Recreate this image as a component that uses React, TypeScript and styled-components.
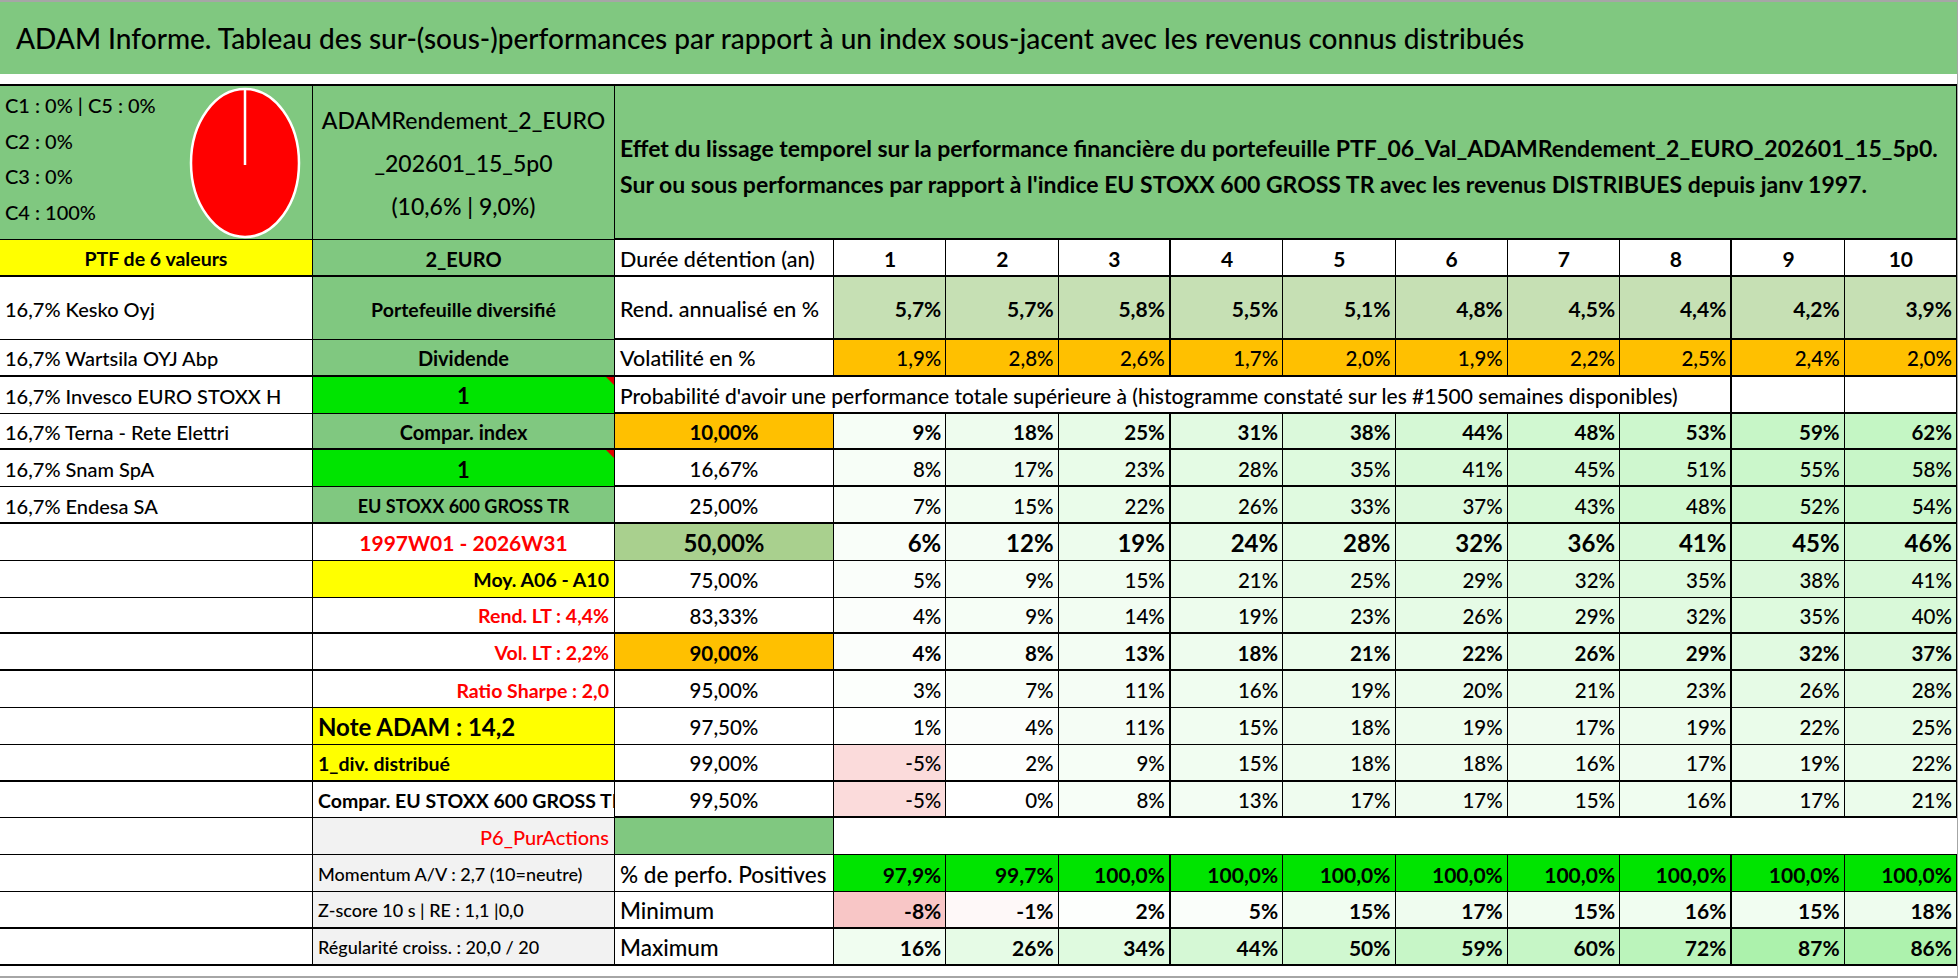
import React from 'react';
import styled, { createGlobalStyle, css } from 'styled-components';

const GREEN = '#80c880';
const LIGHT_GREEN = '#c6e0b4';
const MID_GREEN = '#a9d08e';
const BRIGHT = '#00e400';
const YELLOW = '#ffff00';
const ORANGE = '#ffc000';
const GRAY = '#f2f2f2';
const RED = '#ff0000';

const GlobalStyle = createGlobalStyle`
  html, body { margin: 0; padding: 0; background: #fff; }
  body { font-family: Lato, "Open Sans", "Liberation Sans", sans-serif; color: #000; }
`;

const Frame = styled.div`
  width: 1958px;
  box-sizing: border-box;
  border-top: 2px solid #a6a6a6;
  border-bottom: 2px solid #a6a6a6;
  border-right: 1px solid #a6a6a6;
  display: flex;
  flex-direction: column;
`;

const TitleBar = styled.div`
  height: 72px;
  background: ${GREEN};
  display: flex;
  align-items: center;
  padding-left: 16px;
  font-size: 28px;
  font-weight: 500;
  white-space: nowrap;
`;

const Strip = styled.div`
  height: 10px;
  background: #fff;
`;

const Footer = styled.div`
  height: 10px;
  background: #fff;
`;

const Sheet = styled.div`
  display: grid;
  grid-template-columns: 313px 302px 219px repeat(10, 1fr);
  grid-template-rows: 154px 37px 63px repeat(17, 36.8px);
  border-top: 2px solid #000;
`;

type CellProps = {
  $bg?: string;
  $bb?: number;
  $br?: number;
  $span?: number;
  $align?: 'left' | 'center' | 'right';
  $bold?: boolean;
  $size?: number;
  $color?: string;
  $flag?: boolean;
};

const cellBase = css<CellProps>`
  box-sizing: border-box;
  position: relative;
  display: flex;
  align-items: center;
  justify-content: ${(p) =>
    p.$align === 'center' ? 'center' : p.$align === 'right' ? 'flex-end' : 'flex-start'};
  min-width: 0;
  overflow: hidden;
  white-space: nowrap;
  padding: 2px 5px 0 5px;
  background: ${(p) => p.$bg ?? '#fff'};
  border-right: ${(p) => p.$br ?? 1}px solid #000;
  border-bottom: ${(p) => p.$bb ?? 1}px solid #000;
  color: ${(p) => p.$color ?? '#000'};
  font-weight: ${(p) => (p.$bold ? 700 : 500)};
  font-size: ${(p) => p.$size ?? 20}px;
  grid-column: ${(p) => (p.$span ? `span ${p.$span}` : 'auto')};
  ${(p) =>
    p.$flag &&
    css`
      &::after {
        content: '';
        position: absolute;
        top: 0;
        right: 0;
        border-top: 8px solid #e00000;
        border-left: 8px solid transparent;
      }
    `}
`;

const NameCell = styled.div<CellProps>`
  ${cellBase}
`;
const TagCell = styled.div<CellProps>`
  ${cellBase}
`;
const LabelCell = styled.div<CellProps>`
  ${cellBase}
`;
const ValueCell = styled.div<CellProps>`
  ${cellBase}
  padding-right: 4px;
`;

const CompoCell = styled.div`
  box-sizing: border-box;
  background: ${GREEN};
  border-right: 1px solid #000;
  border-bottom: 1px solid #000;
  display: flex;
  justify-content: space-between;
  align-items: stretch;
  padding: 0 11px 0 5px;
`;

const CompoList = styled.div`
  display: flex;
  flex-direction: column;
  padding-top: 2px;
  font-size: 20px;
  font-weight: 500;
  line-height: 35.5px;
  white-space: nowrap;
`;

const PieBox = styled.div`
  display: flex;
  align-items: center;
`;

const FundCell = styled.div`
  box-sizing: border-box;
  background: ${GREEN};
  border-right: 1px solid #000;
  border-bottom: 1px solid #000;
  display: flex;
  flex-direction: column;
  align-items: center;
  justify-content: center;
  font-size: 23px;
  font-weight: 500;
  line-height: 43px;
  padding-top: 2px;
`;

const EffectCell = styled.div`
  box-sizing: border-box;
  grid-column: span 11;
  background: ${GREEN};
  border-right: 1px solid #000;
  border-bottom: 2px solid #000;
  display: flex;
  flex-direction: column;
  justify-content: center;
  padding: 8px 0 0 5px;
  font-size: 23px;
  font-weight: 700;
  line-height: 36px;
  white-space: nowrap;
  overflow: hidden;
`;

const Pie = () => (
  <svg width="112" height="152" viewBox="0 0 112 152">
    <ellipse cx="56" cy="76" rx="54" ry="74" fill={RED} stroke="#fff" strokeWidth="2.5" />
    <line x1="56" y1="2" x2="56" y2="78" stroke="#fff" strokeWidth="2.5" />
  </svg>
);

type Left = {
  a?: string;
  aBg?: string;
  aBold?: boolean;
  aAlign?: 'left' | 'center' | 'right';
  b?: string;
  bBg?: string;
  bBold?: boolean;
  bAlign?: 'left' | 'center' | 'right';
  bColor?: string;
  bSize?: number;
  flag?: boolean;
};

const leftRows: Left[] = [
  {},
  { a: 'PTF de 6 valeurs', aBg: YELLOW, aBold: true, aAlign: 'center', b: '2_EURO', bBg: GREEN, bBold: true, bAlign: 'center', bSize: 20 },
  { a: '16,7% Kesko Oyj', b: 'Portefeuille diversifié', bBg: GREEN, bBold: true, bAlign: 'center', bSize: 19.5 },
  { a: '16,7% Wartsila OYJ Abp', b: 'Dividende', bBg: GREEN, bBold: true, bAlign: 'center' },
  { a: '16,7% Invesco EURO STOXX H', b: '1', bBg: BRIGHT, bBold: true, bAlign: 'center', flag: true, bSize: 22 },
  { a: '16,7% Terna - Rete Elettri', b: 'Compar. index', bBg: GREEN, bBold: true, bAlign: 'center' },
  { a: '16,7% Snam SpA', b: '1', bBg: BRIGHT, bBold: true, bAlign: 'center', flag: true, bSize: 22 },
  { a: '16,7% Endesa SA', b: 'EU STOXX 600 GROSS TR', bBg: GREEN, bBold: true, bAlign: 'center', bSize: 18 },
  { b: '1997W01 - 2026W31', bColor: RED, bBold: true, bAlign: 'center', bSize: 21 },
  { b: 'Moy. A06 - A10', bBg: YELLOW, bBold: true, bAlign: 'right', bSize: 19.5 },
  { b: 'Rend. LT : 4,4%', bColor: RED, bBold: true, bAlign: 'right', bSize: 19.5 },
  { b: 'Vol. LT : 2,2%', bColor: RED, bBold: true, bAlign: 'right', bSize: 19.5 },
  { b: 'Ratio Sharpe : 2,0', bColor: RED, bBold: true, bAlign: 'right', bSize: 19.5 },
  { b: 'Note ADAM : 14,2', bBg: YELLOW, bBold: true, bAlign: 'left', bSize: 24 },
  { b: '1_div. distribué', bBg: YELLOW, bBold: true, bAlign: 'left', bSize: 19.5 },
  { b: 'Compar. EU STOXX 600 GROSS TR', bBold: true, bAlign: 'left', bSize: 19.5 },
  { b: 'P6_PurActions', bBg: GRAY, bColor: RED, bAlign: 'right', bSize: 20 },
  { b: 'Momentum A/V : 2,7 (10=neutre)', bBg: GRAY, bAlign: 'left', bSize: 18 },
  { b: 'Z-score 10 s | RE : 1,1 |0,0', bBg: GRAY, bAlign: 'left', bSize: 18 },
  { b: 'Régularité croiss. : 20,0 / 20', bBg: GRAY, bAlign: 'left', bSize: 18 },
];

const leftBottom = [1, 2, 1, 2, 1, 2, 1, 2, 1, 1, 2, 2, 1, 1, 2, 1, 1, 1, 2, 2];
const rightBottom = [2, 2, 2, 2, 2, 2, 2, 2, 1, 1, 2, 2, 1, 1, 2, 2, 1, 1, 2, 2];
const colRight = (i: number) => (i === 2 || i === 7 ? 2 : 1);

const mix = (a: number[], b: number[], t: number) =>
  `rgb(${a.map((x, i) => Math.round(x + (b[i] - x) * t)).join(',')})`;
const scaleBg = (v: number) =>
  v < 0
    ? mix([255, 255, 255], [248, 198, 198], Math.min(1, -v / 8))
    : mix([255, 255, 255], [160, 240, 160], Math.min(1, v / 100));

const rend = ['5,7%', '5,7%', '5,8%', '5,5%', '5,1%', '4,8%', '4,5%', '4,4%', '4,2%', '3,9%'];
const vol = ['1,9%', '2,8%', '2,6%', '1,7%', '2,0%', '1,9%', '2,2%', '2,5%', '2,4%', '2,0%'];

type PctRow = { label: string; bg?: string; bold?: boolean; big?: boolean; vals: number[] };
const pctRows: PctRow[] = [
  { label: '10,00%', bg: ORANGE, bold: true, vals: [9, 18, 25, 31, 38, 44, 48, 53, 59, 62] },
  { label: '16,67%', vals: [8, 17, 23, 28, 35, 41, 45, 51, 55, 58] },
  { label: '25,00%', vals: [7, 15, 22, 26, 33, 37, 43, 48, 52, 54] },
  { label: '50,00%', bg: MID_GREEN, bold: true, big: true, vals: [6, 12, 19, 24, 28, 32, 36, 41, 45, 46] },
  { label: '75,00%', vals: [5, 9, 15, 21, 25, 29, 32, 35, 38, 41] },
  { label: '83,33%', vals: [4, 9, 14, 19, 23, 26, 29, 32, 35, 40] },
  { label: '90,00%', bg: ORANGE, bold: true, vals: [4, 8, 13, 18, 21, 22, 26, 29, 32, 37] },
  { label: '95,00%', vals: [3, 7, 11, 16, 19, 20, 21, 23, 26, 28] },
  { label: '97,50%', vals: [1, 4, 11, 15, 18, 19, 17, 19, 22, 25] },
  { label: '99,00%', vals: [-5, 2, 9, 15, 18, 18, 16, 17, 19, 22] },
  { label: '99,50%', vals: [-5, 0, 8, 13, 17, 17, 15, 16, 17, 21] },
];

const positives = ['97,9%', '99,7%', '100,0%', '100,0%', '100,0%', '100,0%', '100,0%', '100,0%', '100,0%', '100,0%'];
const minimum = [-8, -1, 2, 5, 15, 17, 15, 16, 15, 18];
const maximum = [16, 26, 34, 44, 50, 59, 60, 72, 87, 86];

const cols = Array.from({ length: 10 }, (_, i) => i);

function rightSide(r: number): React.ReactNode {
  const bb = rightBottom[r];
  if (r === 1) {
    return (
      <>
        <LabelCell $bb={bb} $size={21.5}>Durée détention (an)</LabelCell>
        {cols.map((i) => (
          <ValueCell key={i} $bb={bb} $br={colRight(i)} $align="center" $bold $size={21}>
            {i + 1}
          </ValueCell>
        ))}
      </>
    );
  }
  if (r === 2) {
    return (
      <>
        <LabelCell $bb={bb} $size={21.5}>Rend. annualisé en %</LabelCell>
        {rend.map((v, i) => (
          <ValueCell key={i} $bb={bb} $br={colRight(i)} $align="right" $bold $size={21} $bg={LIGHT_GREEN}>
            {v}
          </ValueCell>
        ))}
      </>
    );
  }
  if (r === 3) {
    return (
      <>
        <LabelCell $bb={bb} $size={21.5}>Volatilité en %</LabelCell>
        {vol.map((v, i) => (
          <ValueCell key={i} $bb={bb} $br={colRight(i)} $align="right" $size={20.5} $bg={ORANGE}>
            {v}
          </ValueCell>
        ))}
      </>
    );
  }
  if (r === 4) {
    return (
      <>
        <LabelCell $bb={bb} $br={2} $span={9} $size={21}>
          Probabilité d'avoir une performance totale supérieure à (histogramme constaté sur les #1500 semaines disponibles)
        </LabelCell>
        <ValueCell $bb={bb} />
        <ValueCell $bb={bb} />
      </>
    );
  }
  if (r >= 5 && r <= 15) {
    const row = pctRows[r - 5];
    const size = row.big ? 24 : 20.5;
    return (
      <>
        <LabelCell $bb={bb} $align="center" $bold={row.bold} $size={size} $bg={row.bg}>
          {row.label}
        </LabelCell>
        {row.vals.map((v, i) => (
          <ValueCell key={i} $bb={bb} $br={colRight(i)} $align="right" $bold={row.bold} $size={size} $bg={scaleBg(v)}>
            {`${v}%`}
          </ValueCell>
        ))}
      </>
    );
  }
  if (r === 16) {
    return (
      <>
        <LabelCell $bb={bb} $bg={GREEN} />
        <ValueCell $bb={bb} $br={0} $span={10} />
      </>
    );
  }
  if (r === 17) {
    return (
      <>
        <LabelCell $bb={bb} $size={22.5}>% de perfo. Positives</LabelCell>
        {positives.map((v, i) => (
          <ValueCell key={i} $bb={bb} $br={colRight(i)} $align="right" $bold $size={21} $bg={BRIGHT}>
            {v}
          </ValueCell>
        ))}
      </>
    );
  }
  const data = r === 18 ? minimum : maximum;
  return (
    <>
      <LabelCell $bb={bb} $size={22.5}>{r === 18 ? 'Minimum' : 'Maximum'}</LabelCell>
      {data.map((v, i) => (
        <ValueCell key={i} $bb={bb} $br={colRight(i)} $align="right" $bold $size={21} $bg={scaleBg(v)}>
          {`${v}%`}
        </ValueCell>
      ))}
    </>
  );
}

export default function App() {
  return (
    <>
      <GlobalStyle />
      <Frame>
        <TitleBar>
          ADAM Informe. Tableau des sur-(sous-)performances par rapport à un index sous-jacent avec les revenus connus distribués
        </TitleBar>
        <Strip />
        <Sheet>
          <CompoCell>
            <CompoList>
              <span>C1 : 0% | C5 : 0%</span>
              <span>C2 : 0%</span>
              <span>C3 : 0%</span>
              <span>C4 : 100%</span>
            </CompoList>
            <PieBox>
              <Pie />
            </PieBox>
          </CompoCell>
          <FundCell>
            <span>ADAMRendement_2_EURO</span>
            <span>_202601_15_5p0</span>
            <span>(10,6% | 9,0%)</span>
          </FundCell>
          <EffectCell>
            <span>
              Effet du lissage temporel sur la performance financière du portefeuille PTF_06_Val_ADAMRendement_2_EURO_202601_15_5p0.
            </span>
            <span>
              Sur ou sous performances par rapport à l'indice EU STOXX 600 GROSS TR avec les revenus DISTRIBUES depuis janv 1997.
            </span>
          </EffectCell>
          {leftRows.slice(1).map((row, k) => {
            const r = k + 1;
            return (
              <React.Fragment key={r}>
                <NameCell $bb={leftBottom[r]} $bg={row.aBg} $bold={row.aBold} $align={row.aAlign} $size={row.aBold ? 19.5 : 20}>
                  {row.a}
                </NameCell>
                <TagCell
                  $bb={leftBottom[r]}
                  $bg={row.bBg}
                  $bold={row.bBold}
                  $align={row.bAlign}
                  $color={row.bColor}
                  $size={row.bSize ?? 20}
                  $flag={row.flag}
                >
                  {row.b}
                </TagCell>
                {rightSide(r)}
              </React.Fragment>
            );
          })}
        </Sheet>
        <Footer />
      </Frame>
    </>
  );
}
